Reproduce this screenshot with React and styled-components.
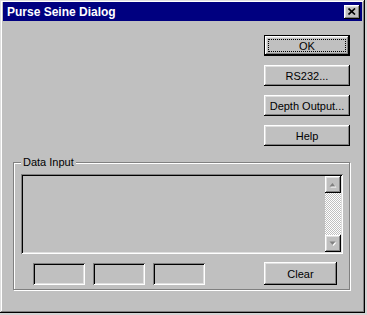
import React from "react";
import styled, { createGlobalStyle, css } from "styled-components";

const GlobalStyle = createGlobalStyle`
  html, body {
    margin: 0;
    padding: 0;
    background: #d4d4d4;
  }
  body {
    font-family: "Liberation Sans", Arial, sans-serif;
    font-size: 11px;
    color: #000;
  }
  *, *::before, *::after {
    box-sizing: border-box;
  }
`;

const raised = css`
  box-shadow: inset -1px -1px #000, inset 1px 1px #fff, inset -2px -2px #808080,
    inset 2px 2px #dfdfdf;
`;

const sunken = css`
  box-shadow: inset 1px 1px #808080, inset -1px -1px #fff, inset 2px 2px #000,
    inset -2px -2px #dfdfdf;
`;

const Window = styled.div`
  width: 365px;
  height: 313px;
  background: #c0c0c0;
  padding: 2px 3px 3px 3px;
  display: flex;
  flex-direction: column;
  box-shadow: inset -1px -1px #000, inset 1px 1px #dfdfdf, inset -2px -2px #808080,
    inset 2px 2px #fff;
`;

const TitleBar = styled.div`
  height: 19px;
  background: #000080;
  color: #fff;
  display: flex;
  align-items: center;
  justify-content: space-between;
  padding: 0 2px 0 4px;
  font-weight: bold;
  font-size: 12px;
`;

const CloseButton = styled.div`
  width: 16px;
  height: 14px;
  background: #c0c0c0;
  display: flex;
  align-items: center;
  justify-content: center;
  ${raised}
`;

const Body = styled.div`
  flex: 1;
  display: flex;
  flex-direction: column;
  padding: 14px 12px 0 10px;
`;

const TopRow = styled.div`
  display: flex;
  justify-content: flex-end;
`;

const ButtonColumn = styled.div`
  width: 86px;
  display: flex;
  flex-direction: column;
  gap: 9px;
`;

const Button = styled.div`
  position: relative;
  height: ${(p) => p.$h || 21}px;
  width: ${(p) => (p.$w ? `${p.$w}px` : "auto")};
  background: #c0c0c0;
  display: flex;
  align-items: center;
  justify-content: center;
  font-size: 11px;
  ${raised}
  ${(p) =>
    p.$default &&
    css`
      border: 1px solid #000;
      &::after {
        content: "";
        position: absolute;
        inset: 3px;
        border: 1px dotted #000;
      }
    `}
`;

const Group = styled.div`
  position: relative;
  margin-top: 16px;
  width: 337px;
  border: 1px solid #808080;
  box-shadow: inset 1px 1px #fff, 1px 1px #fff;
  padding: 11px 6px 4px 7px;
  display: flex;
  flex-direction: column;
  gap: 8px;
`;

const Legend = styled.span`
  position: absolute;
  top: -8px;
  left: 7px;
  background: #c0c0c0;
  padding: 0 2px;
  line-height: 14px;
`;

const ListBox = styled.div`
  height: 80px;
  background: #c0c0c0;
  padding: 2px;
  display: flex;
  justify-content: flex-end;
  ${sunken}
`;

const ScrollBar = styled.div`
  width: 16px;
  display: flex;
  flex-direction: column;
`;

const ArrowButton = styled.div`
  height: 17px;
  background: #c0c0c0;
  display: flex;
  align-items: center;
  justify-content: center;
  ${raised}
`;

const Track = styled.div`
  flex: 1;
  background: repeating-conic-gradient(#fff 0 25%, #c0c0c0 0 50%) 0 0 / 2px 2px;
`;

const FieldRow = styled.div`
  display: flex;
  align-items: center;
  padding: 0 6px 0 12px;
  gap: 8px;
`;

const Field = styled.div`
  width: 52px;
  height: 22px;
  background: #c0c0c0;
  ${sunken}
`;

const Spacer = styled.div`
  flex: 1;
`;

const Arrow = ({ up }) => (
  <svg width="9" height="6" viewBox="0 0 9 6">
    {up ? (
      <>
        <polygon points="1.5,5.5 4.5,2 7.5,5.5" fill="#fff" />
        <polygon points="0.5,4.5 3.5,1 6.5,4.5" fill="#808080" />
      </>
    ) : (
      <>
        <polygon points="1.5,1.5 7.5,1.5 4.5,5" fill="#fff" />
        <polygon points="0.5,0.5 6.5,0.5 3.5,4" fill="#808080" />
      </>
    )}
  </svg>
);

export default function App() {
  return (
    <>
      <GlobalStyle />
      <Window>
        <TitleBar>
          <span>Purse Seine Dialog</span>
          <CloseButton>
            <svg width="8" height="7" viewBox="0 0 8 7">
              <path d="M0.5 0.5 L7 6.5 M7 0.5 L0.5 6.5" stroke="#000" strokeWidth="1.7" />
            </svg>
          </CloseButton>
        </TitleBar>
        <Body>
          <TopRow>
            <ButtonColumn>
              <Button $default>OK</Button>
              <Button>RS232...</Button>
              <Button>Depth Output...</Button>
              <Button>Help</Button>
            </ButtonColumn>
          </TopRow>
          <Group>
            <Legend>Data Input</Legend>
            <ListBox>
              <ScrollBar>
                <ArrowButton>
                  <Arrow up />
                </ArrowButton>
                <Track />
                <ArrowButton>
                  <Arrow />
                </ArrowButton>
              </ScrollBar>
            </ListBox>
            <FieldRow>
              <Field />
              <Field />
              <Field />
              <Spacer />
              <Button $w={73} $h={23}>Clear</Button>
            </FieldRow>
          </Group>
        </Body>
      </Window>
    </>
  );
}
